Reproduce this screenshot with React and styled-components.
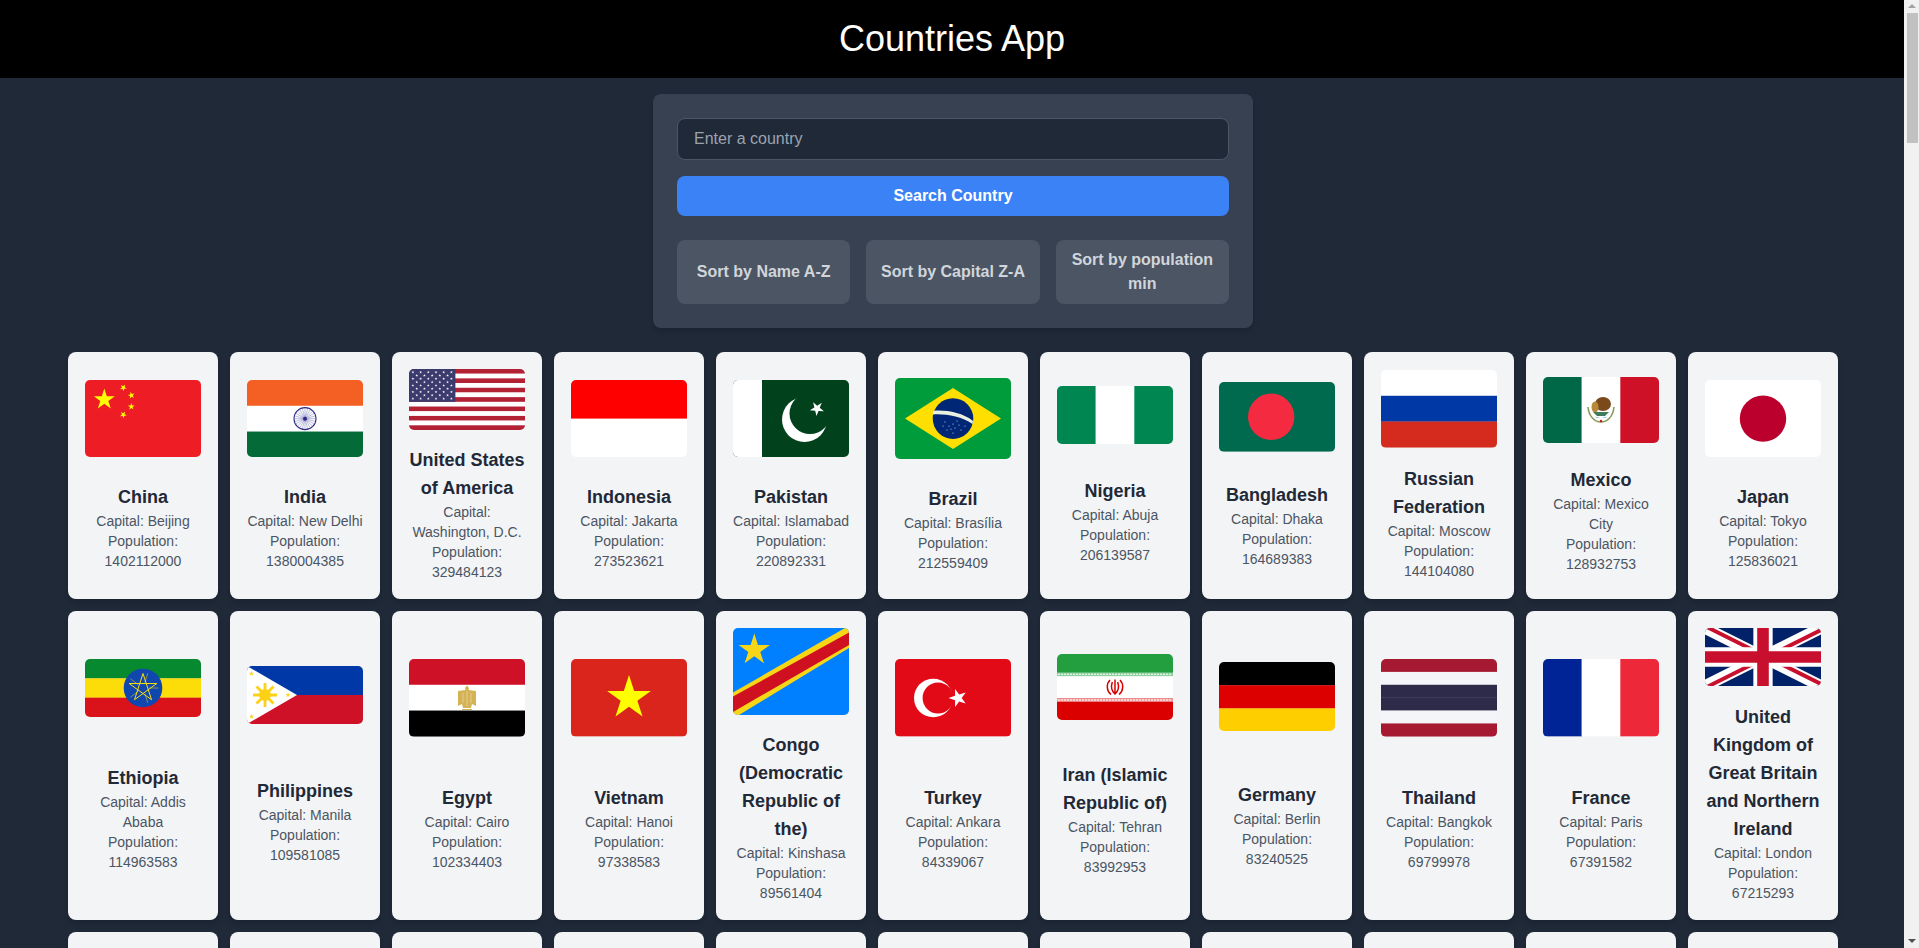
import React from "react";
import styled, { createGlobalStyle } from "styled-components";

const GlobalStyle = createGlobalStyle`
  body {
    margin: 0;
    background: #1f2937;
    font-family: "Liberation Sans", Arial, sans-serif;
  }
`;

const Page = styled.div`
  margin-right: 15px;
`;

// the page scrollbar as it stands at the top of a long list
const ScrollTrack = styled.div`
  position: fixed;
  top: 0;
  right: 0;
  bottom: 0;
  width: 15px;
  background: #f1f1f1;
`;

const ScrollArrow = styled.div`
  position: absolute;
  left: 4px;
  width: 0;
  height: 0;
  border-left: 4px solid transparent;
  border-right: 4px solid transparent;
  ${(p) =>
    p.$down
      ? "bottom: 5px; border-top: 4px solid #505050;"
      : "top: 4px; border-bottom: 4px solid #a3a3a3;"}
`;

const ScrollThumb = styled.div`
  position: absolute;
  top: 13px;
  left: 3px;
  width: 11px;
  height: 130px;
  background: #c1c1c1;
`;

const Header = styled.header`
  background: #000000;
  padding: 19px 0;
  text-align: center;
`;

const Title = styled.h1`
  margin: 0;
  color: #ffffff;
  font-size: 36px;
  line-height: 40px;
  font-weight: 400;
`;

const Panel = styled.section`
  width: 600px;
  box-sizing: border-box;
  margin: 16px 0 24px calc(50% - 299px);
  padding: 24px;
  background: #374151;
  border-radius: 8px;
  box-shadow: 0 4px 6px -1px rgba(0, 0, 0, 0.1), 0 2px 4px -2px rgba(0, 0, 0, 0.1);
  display: flex;
  flex-direction: column;
`;

const SearchInput = styled.input`
  box-sizing: border-box;
  height: 42px;
  padding: 0 16px;
  margin-bottom: 16px;
  background: #1f2937;
  border: 1px solid #4b5563;
  border-radius: 8px;
  color: #ffffff;
  font: 16px "Liberation Sans", Arial, sans-serif;

  &::placeholder {
    color: #9ca3af;
    opacity: 1;
  }
`;

const SearchButton = styled.button`
  height: 40px;
  margin-bottom: 24px;
  border: none;
  border-radius: 8px;
  background: #3b82f6;
  color: #ffffff;
  font: 700 16px/24px "Liberation Sans", Arial, sans-serif;
`;

const SortRow = styled.div`
  display: grid;
  grid-template-columns: repeat(3, 1fr);
  gap: 16px;
`;

const SortButton = styled.button`
  height: 64px;
  padding: 8px 12px;
  border: none;
  border-radius: 8px;
  background: #4b5563;
  color: #d1d5db;
  font: 700 16px/24px "Liberation Sans", Arial, sans-serif;
`;

const Grid = styled.main`
  display: grid;
  grid-template-columns: repeat(11, 150px);
  gap: 12px;
  padding: 0 66px 24px 68px;
`;

const Card = styled.article`
  box-sizing: border-box;
  padding: 17px;
  background: #f3f4f6;
  border-radius: 8px;
  box-shadow: 0 4px 6px -1px rgba(0, 0, 0, 0.1), 0 2px 4px -2px rgba(0, 0, 0, 0.1);
  display: flex;
  flex-direction: column;
  justify-content: space-evenly;
  text-align: center;
`;

const FlagSvg = styled.svg`
  display: block;
  width: 116px;
  flex: none;
  margin-bottom: 16px;
  border-radius: 5px;
`;

const Name = styled.h2`
  margin: 0;
  color: #1f2937;
  font-size: 18px;
  line-height: 28px;
  font-weight: 700;
`;

const Info = styled.p`
  margin: 0;
  color: #4b5563;
  font-size: 14px;
  line-height: 20px;
`;

const starPoints = (cx, cy, r, rot = -90) => {
  const pts = [];
  for (let i = 0; i < 10; i++) {
    const rad = i % 2 === 0 ? r : r * 0.382;
    const a = ((rot + i * 36) * Math.PI) / 180;
    pts.push(`${(cx + rad * Math.cos(a)).toFixed(2)},${(cy + rad * Math.sin(a)).toFixed(2)}`);
  }
  return pts.join(" ");
};

const Star = ({ x, y, r, fill, rot }) => <polygon points={starPoints(x, y, r, rot)} fill={fill} />;

// equal bands, across or down
const Bands = ({ colors, w, h, down }) =>
  colors.map((c, i) =>
    down ? (
      <rect key={i} x={(i * w) / colors.length} y="0" width={w / colors.length + 0.2} height={h} fill={c} />
    ) : (
      <rect key={i} x="0" y={(i * h) / colors.length} width={w} height={h / colors.length + 0.2} fill={c} />
    )
  );

const Spokes = ({ x, y, r, n, color, width = 0.3, inner = 0 }) =>
  Array.from({ length: n }, (_, i) => {
    const a = (i * 2 * Math.PI) / n;
    return (
      <line
        key={i}
        x1={x + inner * Math.cos(a)}
        y1={y + inner * Math.sin(a)}
        x2={x + r * Math.cos(a)}
        y2={y + r * Math.sin(a)}
        stroke={color}
        strokeWidth={width}
      />
    );
  });

const usaStars = [];
for (let row = 0; row < 9; row++) {
  const count = row % 2 === 0 ? 6 : 5;
  for (let col = 0; col < count; col++) {
    usaStars.push([row % 2 === 0 ? 3.9 + col * 7.7 : 7.75 + col * 7.7, 3.2 + row * 3.3]);
  }
}

const brazilDots = [
  [50, 44], [54, 48], [58, 46], [60, 50], [64, 47], [52, 52], [58, 55], [66, 52], [48, 48], [62, 43], [56, 51], [70, 48]
];

const FLAGS = {
  china: (
    <>
      <rect width="116" height="77.33" fill="#ee1c25" />
      <Star x={19.3} y={19.6} r={11} fill="#ffff00" />
      <Star x={38.3} y={7.7} r={3.6} fill="#ffff00" rot={-60} />
      <Star x={46.3} y={15.3} r={3.6} fill="#ffff00" rot={-30} />
      <Star x={46.3} y={26.7} r={3.6} fill="#ffff00" />
      <Star x={38.3} y={34.7} r={3.6} fill="#ffff00" rot={-60} />
    </>
  ),
  india: (
    <>
      <Bands colors={["#f46024", "#ffffff", "#046a38"]} w={116} h={77.33} />
      <circle cx="58" cy="38.67" r="11" fill="#ffffff" stroke="#2b2b85" strokeWidth="1.1" />
      <Spokes x={58} y={38.67} r={10.5} n={24} color="#6a6ab5" width={0.45} />
      <circle cx="58" cy="38.67" r="2" fill="#2b2b85" />
    </>
  ),
  usa: (
    <>
      {Array.from({ length: 13 }, (_, i) => (
        <rect key={i} y={(i * 61) / 13} width="116" height={61 / 13 + 0.1} fill={i % 2 === 0 ? "#b22234" : "#ffffff"} />
      ))}
      <rect width="46.4" height="32.85" fill="#3c3b6e" />
      {usaStars.map(([x, y], i) => (
        <Star key={i} x={x} y={y} r={1.5} fill="#ffffff" />
      ))}
    </>
  ),
  indonesia: <Bands colors={["#ff0000", "#ffffff"]} w={116} h={77.33} />,
  pakistan: (
    <>
      <rect width="116" height="77.33" fill="#01411c" />
      <rect width="29" height="77.33" fill="#ffffff" />
      <circle cx="71.5" cy="39.5" r="22.5" fill="#ffffff" />
      <circle cx="77" cy="33.5" r="20.5" fill="#01411c" />
      <Star x={84} y={28.5} r={7.4} fill="#ffffff" rot={-50} />
    </>
  ),
  brazil: (
    <>
      <rect width="116" height="81.2" fill="#009b3a" />
      <polygon points="10,40.6 58,10 106,40.6 58,71" fill="#fedf00" />
      <circle cx="58" cy="40.6" r="20.3" fill="#002776" />
      <path d="M38 33 C48 31.5 67 34 78 43 L77.5 46 C66 38 49 35.5 37.9 36.5 Z" fill="#e8f0e0" />
      {brazilDots.map(([x, y], i) => (
        <circle key={i} cx={x} cy={y} r="0.5" fill="#ffffff" />
      ))}
    </>
  ),
  nigeria: <Bands colors={["#008751", "#ffffff", "#008751"]} w={116} h={58} down />,
  bangladesh: (
    <>
      <rect width="116" height="69.6" fill="#006a4e" />
      <circle cx="52.2" cy="34.8" r="23.2" fill="#f42a41" />
    </>
  ),
  russia: <Bands colors={["#ffffff", "#0039a6", "#d52b1e"]} w={116} h={77.33} />,
  mexico: (
    <>
      <Bands colors={["#006847", "#ffffff", "#ce1126"]} w={116} h={66.3} down />
      <path d="M45 30 C46 40 52 45 58 45 C64 45 70 40 71 30" fill="none" stroke="#8a9a5b" strokeWidth="1.6" />
      <path d="M50 38 C54 42 62 42 66 38 L62 41 L54 41 Z" fill="#2f9ab0" />
      <ellipse cx="60" cy="27" rx="8" ry="7" fill="#7a4a1c" />
      <ellipse cx="52" cy="30" rx="3.5" ry="5.5" fill="#b8893a" />
      <path d="M50 35 L66 35 L62 39 L54 39 Z" fill="#3f7c5a" />
      <circle cx="58" cy="44" r="1.2" fill="#ce1126" />
    </>
  ),
  japan: (
    <>
      <rect width="116" height="77.33" fill="#ffffff" />
      <circle cx="58" cy="38.67" r="23.2" fill="#bc002d" />
    </>
  ),
  ethiopia: (
    <>
      <Bands colors={["#078930", "#fcdd09", "#da121a"]} w={116} h={58} />
      <circle cx="58" cy="29" r="19.3" fill="#0f47af" />
      <Spokes x={58} y={29} r={15.5} n={5} color="#fcdd09" width={0.5} inner={6} />
      <polygon
        points={[0, 2, 4, 1, 3].map((i) => {
          const a = ((-90 + i * 72) * Math.PI) / 180;
          return `${(58 + 14.5 * Math.cos(a)).toFixed(2)},${(29 + 14.5 * Math.sin(a)).toFixed(2)}`;
        }).join(" ")}
        fill="none"
        stroke="#fcdd09"
        strokeWidth="1"
      />
    </>
  ),
  philippines: (
    <>
      <rect width="116" height="29" fill="#0038a8" />
      <rect y="29" width="116" height="29" fill="#ce1126" />
      <polygon points="0,0 50,29 0,58" fill="#ffffff" />
      <Spokes x={18} y={29} r={12} n={8} color="#fcd116" width={2.8} />
      <circle cx="18" cy="29" r="6" fill="#fcd116" />
      <Star x={4.5} y={7.5} r={2.8} fill="#fcd116" />
      <Star x={4.5} y={50.5} r={2.8} fill="#fcd116" />
      <Star x={41} y={29} r={2.8} fill="#fcd116" />
    </>
  ),
  egypt: (
    <>
      <Bands colors={["#ce1126", "#ffffff", "#000000"]} w={116} h={77.33} />
      <path d="M58 26.5 L60 29 L59.5 31 L67 32 L67 47 L63 45 L62 49 L54 49 L53 45 L49 47 L49 32 L56.5 31 L56 29 Z" fill="#d4b355" />
      <path d="M58 32 V47 M54 34 V44 M62 34 V44" stroke="#ffffff" strokeWidth="0.6" opacity="0.6" />
      <path d="M53 50.5 H63" stroke="#d4b355" strokeWidth="1.2" />
    </>
  ),
  vietnam: (
    <>
      <rect width="116" height="77.33" fill="#da251d" />
      <Star x={58} y={39} r={23} fill="#ffff00" />
    </>
  ),
  congo: (
    <>
      <rect width="116" height="87" fill="#007fff" />
      <polygon points="0,64.5 112,0 116,0 116,20 6,87 0,87" fill="#f7d618" />
      <polygon points="0,68.5 116,4.5 116,17 0,84" fill="#ce1021" />
      <Star x={21.3} y={22} r={16.5} fill="#f7d618" />
    </>
  ),
  turkey: (
    <>
      <rect width="116" height="77.33" fill="#e30a17" />
      <circle cx="38.3" cy="39" r="19.3" fill="#ffffff" />
      <circle cx="43" cy="39" r="15.4" fill="#e30a17" />
      <Star x={63} y={39} r={9.5} fill="#ffffff" rot={180} />
    </>
  ),
  iran: (
    <>
      <Bands colors={["#239f40", "#ffffff", "#da0000"]} w={116} h={66.3} />
      <rect y="18.5" width="116" height="3.6" fill="#8fcf9f" />
      <rect y="44.2" width="116" height="3.6" fill="#efa0a0" />
      <path d="M1 20.3 H115" stroke="#ffffff" strokeWidth="1.1" strokeDasharray="2 1" />
      <path d="M1 46 H115" stroke="#ffffff" strokeWidth="1.1" strokeDasharray="2 1" />
      <path
        d="M58 25.5 V40.5 M55.3 28 C54 32 54.5 37 58 40 C61.5 37 62 32 60.7 28 M53 26 C49 30 49.5 37 54 40.5 M63 26 C67 30 66.5 37 62 40.5"
        fill="none"
        stroke="#da0000"
        strokeWidth="1.5"
      />
    </>
  ),
  germany: <Bands colors={["#000000", "#dd0000", "#ffce00"]} w={116} h={69.6} />,
  thailand: <Bands colors={["#a51931", "#f4f5f8", "#2d2a4a", "#2d2a4a", "#f4f5f8", "#a51931"]} w={116} h={77.33} />,
  france: <Bands colors={["#002395", "#ffffff", "#ed2939"]} w={116} h={77.33} down />,
  uk: (
    <>
      <rect width="116" height="58" fill="#012169" />
      <path d="M0 0 L116 58 M116 0 L0 58" stroke="#ffffff" strokeWidth="11.6" />
      <path d="M0 0 L58 29 M116 58 L58 29" stroke="#c8102e" strokeWidth="3.9" transform="translate(1.9 -1)" />
      <path d="M116 0 L58 29 M0 58 L58 29" stroke="#c8102e" strokeWidth="3.9" transform="translate(1.9 1)" />
      <path d="M58 0 V58 M0 29 H116" stroke="#ffffff" strokeWidth="19.3" />
      <path d="M58 0 V58 M0 29 H116" stroke="#c8102e" strokeWidth="11.6" />
    </>
  ),
  tanzania: <Bands colors={["#1eb53a", "#000000", "#00a3dd"]} w={116} h={77.33} />,
  italy: <Bands colors={["#009246", "#ffffff", "#ce2b37"]} w={116} h={77.33} down />,
  southAfrica: <Bands colors={["#e03c31", "#007749", "#001489"]} w={116} h={77.33} />,
  myanmar: <Bands colors={["#fecb00", "#34b233", "#ea2839"]} w={116} h={77.33} />,
  kenya: <Bands colors={["#000000", "#bb0000", "#006600"]} w={116} h={77.33} />,
  korea: <Bands colors={["#ffffff"]} w={116} h={77.33} />,
  colombia: <Bands colors={["#fcd116", "#003893", "#ce1126"]} w={116} h={77.33} />,
  spain: <Bands colors={["#aa151b", "#f1bf00", "#aa151b"]} w={116} h={77.33} />,
  uganda: <Bands colors={["#000000", "#fcdc04", "#d90000"]} w={116} h={77.33} />,
  argentina: <Bands colors={["#74acdf", "#ffffff", "#74acdf"]} w={116} h={77.33} />,
  algeria: <Bands colors={["#006233", "#ffffff"]} w={116} h={77.33} down />
};

const COUNTRIES = [
  { name: "China", capital: "Beijing", population: 1402112000, flag: "china", h: 77.33 },
  { name: "India", capital: "New Delhi", population: 1380004385, flag: "india", h: 77.33 },
  { name: "United States of America", capital: "Washington, D.C.", population: 329484123, flag: "usa", h: 61 },
  { name: "Indonesia", capital: "Jakarta", population: 273523621, flag: "indonesia", h: 77.33 },
  { name: "Pakistan", capital: "Islamabad", population: 220892331, flag: "pakistan", h: 77.33 },
  { name: "Brazil", capital: "Brasília", population: 212559409, flag: "brazil", h: 81.2 },
  { name: "Nigeria", capital: "Abuja", population: 206139587, flag: "nigeria", h: 58 },
  { name: "Bangladesh", capital: "Dhaka", population: 164689383, flag: "bangladesh", h: 69.6 },
  { name: "Russian Federation", capital: "Moscow", population: 144104080, flag: "russia", h: 77.33 },
  { name: "Mexico", capital: "Mexico City", population: 128932753, flag: "mexico", h: 66.3 },
  { name: "Japan", capital: "Tokyo", population: 125836021, flag: "japan", h: 77.33 },
  { name: "Ethiopia", capital: "Addis Ababa", population: 114963583, flag: "ethiopia", h: 58 },
  { name: "Philippines", capital: "Manila", population: 109581085, flag: "philippines", h: 58 },
  { name: "Egypt", capital: "Cairo", population: 102334403, flag: "egypt", h: 77.33 },
  { name: "Vietnam", capital: "Hanoi", population: 97338583, flag: "vietnam", h: 77.33 },
  { name: "Congo (Democratic Republic of the)", capital: "Kinshasa", population: 89561404, flag: "congo", h: 87 },
  { name: "Turkey", capital: "Ankara", population: 84339067, flag: "turkey", h: 77.33 },
  { name: "Iran (Islamic Republic of)", capital: "Tehran", population: 83992953, flag: "iran", h: 66.3 },
  { name: "Germany", capital: "Berlin", population: 83240525, flag: "germany", h: 69.6 },
  { name: "Thailand", capital: "Bangkok", population: 69799978, flag: "thailand", h: 77.33 },
  { name: "France", capital: "Paris", population: 67391582, flag: "france", h: 77.33 },
  { name: "United Kingdom of Great Britain and Northern Ireland", capital: "London", population: 67215293, flag: "uk", h: 58 },
  { name: "Tanzania", capital: "Dodoma", population: 59734213, flag: "tanzania", h: 77.33 },
  { name: "Italy", capital: "Rome", population: 59554023, flag: "italy", h: 77.33 },
  { name: "South Africa", capital: "Pretoria", population: 59308690, flag: "southAfrica", h: 77.33 },
  { name: "Myanmar", capital: "Naypyidaw", population: 54409794, flag: "myanmar", h: 77.33 },
  { name: "Kenya", capital: "Nairobi", population: 53771300, flag: "kenya", h: 77.33 },
  { name: "Korea (Republic of)", capital: "Seoul", population: 51780579, flag: "korea", h: 77.33 },
  { name: "Colombia", capital: "Bogotá", population: 50882884, flag: "colombia", h: 77.33 },
  { name: "Spain", capital: "Madrid", population: 47351567, flag: "spain", h: 77.33 },
  { name: "Uganda", capital: "Kampala", population: 45741000, flag: "uganda", h: 77.33 },
  { name: "Argentina", capital: "Buenos Aires", population: 45376763, flag: "argentina", h: 77.33 },
  { name: "Algeria", capital: "Algiers", population: 43851043, flag: "algeria", h: 77.33 }
];

export default function App() {
  return (
    <Page>
      <GlobalStyle />
      <Header>
        <Title>Countries App</Title>
      </Header>
      <Panel>
        <SearchInput type="text" placeholder="Enter a country" />
        <SearchButton type="button">Search Country</SearchButton>
        <SortRow>
          <SortButton type="button">Sort by Name A-Z</SortButton>
          <SortButton type="button">Sort by Capital Z-A</SortButton>
          <SortButton type="button">Sort by population min</SortButton>
        </SortRow>
      </Panel>
      <Grid>
        {COUNTRIES.map((c) => (
          <Card key={c.name}>
            <FlagSvg viewBox={`0 0 116 ${c.h}`} height={c.h}>
              {FLAGS[c.flag]}
            </FlagSvg>
            <div>
              <Name>{c.name}</Name>
              <Info>Capital: {c.capital}</Info>
              <Info>Population: {c.population}</Info>
            </div>
          </Card>
        ))}
      </Grid>
      <ScrollTrack>
        <ScrollArrow />
        <ScrollThumb />
        <ScrollArrow $down />
      </ScrollTrack>
    </Page>
  );
}
